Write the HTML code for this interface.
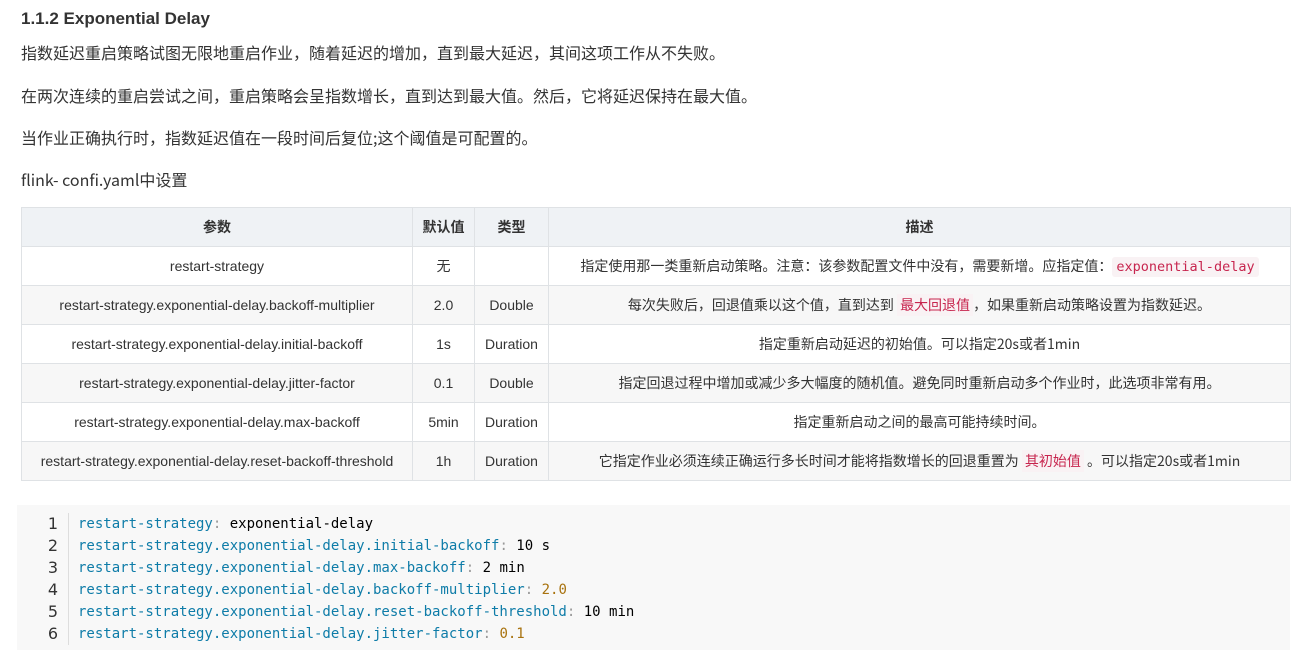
<!DOCTYPE html>
<html><head><meta charset="utf-8"><style>
body{margin:0;background:#fff;font-family:"Liberation Sans","Noto Sans CJK SC",sans-serif;color:#333;width:1308px;height:663px;overflow:hidden;position:relative}
h3{position:absolute;left:21px;top:9px;margin:0;font-size:17px;font-weight:bold;color:#333}
p{position:absolute;left:21px;margin:0;font-size:16px;color:#333;font-family:"Noto Sans CJK SC","Liberation Sans",sans-serif;line-height:22px}
table{position:absolute;left:21px;top:207px;border-collapse:collapse;font-size:14px;width:1270px;font-family:"Liberation Sans","Noto Sans CJK SC",sans-serif}
td,th{border:1px solid #dfe2e5;text-align:center;height:38px;padding:0 6px;color:#333}
td:nth-child(4){font-family:"Noto Sans CJK SC","Liberation Sans",sans-serif;font-size:14px}
th{background:#eff2f5;font-weight:bold}
tr:nth-child(odd) td{background:#f7f7f7}
code{font-family:"DejaVu Sans Mono",monospace;color:#c7254e;background:#f9f2f4;padding:2px 4px;border-radius:3px;font-size:13.5px}
.r{color:#c7254e;background:#f9f2f4;padding:1px 3px;font-size:14px}
.code{position:absolute;left:17px;top:505px;width:1273px;height:145px;background:#f8f8f8}
.ln{position:absolute;left:13px;top:8px;width:28px;text-align:right;font-family:"DejaVu Sans",sans-serif;font-size:16px;line-height:22px;color:#333;padding-right:10px;border-right:1px solid #ddd}
.src{position:absolute;left:61px;top:8px;font-family:"DejaVu Sans Mono",monospace;font-size:14px;line-height:22px;color:#000;white-space:pre}
.k{color:#0e7ca8}.n{color:#a8720e}.p{color:#999}
</style></head><body>
<h3>1.1.2 Exponential Delay</h3>
<p style="top:41px">指数延迟重启策略试图无限地重启作业，随着延迟的增加，直到最大延迟，其间这项工作从不失败。</p>
<p style="top:84px">在两次连续的重启尝试之间，重启策略会呈指数增长，直到达到最大值。然后，它将延迟保持在最大值。</p>
<p style="top:126px">当作业正确执行时，指数延迟值在一段时间后复位;这个阈值是可配置的。</p>
<p style="top:168px">flink- conﬁ.yaml中设置</p>
<table>
<tr><th style="width:378px">参数</th><th style="width:49px">默认值</th><th style="width:61px">类型</th><th>描述</th></tr>
<tr><td>restart-strategy</td><td>无</td><td></td><td>指定使用那一类重新启动策略。注意：该参数配置文件中没有，需要新增。应指定值：<code>exponential-delay</code></td></tr>
<tr><td>restart-strategy.exponential-delay.backoff-multiplier</td><td>2.0</td><td>Double</td><td>每次失败后，回退值乘以这个值，直到达到 <span class="r">最大回退值</span>，如果重新启动策略设置为指数延迟。</td></tr>
<tr><td>restart-strategy.exponential-delay.initial-backoff</td><td>1s</td><td>Duration</td><td>指定重新启动延迟的初始值。可以指定20s或者1min</td></tr>
<tr><td>restart-strategy.exponential-delay.jitter-factor</td><td>0.1</td><td>Double</td><td>指定回退过程中增加或减少多大幅度的随机值。避免同时重新启动多个作业时，此选项非常有用。</td></tr>
<tr><td>restart-strategy.exponential-delay.max-backoff</td><td>5min</td><td>Duration</td><td>指定重新启动之间的最高可能持续时间。</td></tr>
<tr><td>restart-strategy.exponential-delay.reset-backoff-threshold</td><td>1h</td><td>Duration</td><td>它指定作业必须连续正确运行多长时间才能将指数增长的回退重置为 <span class="r">其初始值</span> 。可以指定20s或者1min</td></tr>
</table>
<div class="code">
<div class="ln">1<br>2<br>3<br>4<br>5<br>6</div>
<div class="src"><span class="k">restart-strategy</span><span class="p">:</span> exponential-delay
<span class="k">restart-strategy.exponential-delay.initial-backoff</span><span class="p">:</span> 10 s
<span class="k">restart-strategy.exponential-delay.max-backoff</span><span class="p">:</span> 2 min
<span class="k">restart-strategy.exponential-delay.backoff-multiplier</span><span class="p">:</span> <span class="n">2.0</span>
<span class="k">restart-strategy.exponential-delay.reset-backoff-threshold</span><span class="p">:</span> 10 min
<span class="k">restart-strategy.exponential-delay.jitter-factor</span><span class="p">:</span> <span class="n">0.1</span></div>
</div>
</body></html>
